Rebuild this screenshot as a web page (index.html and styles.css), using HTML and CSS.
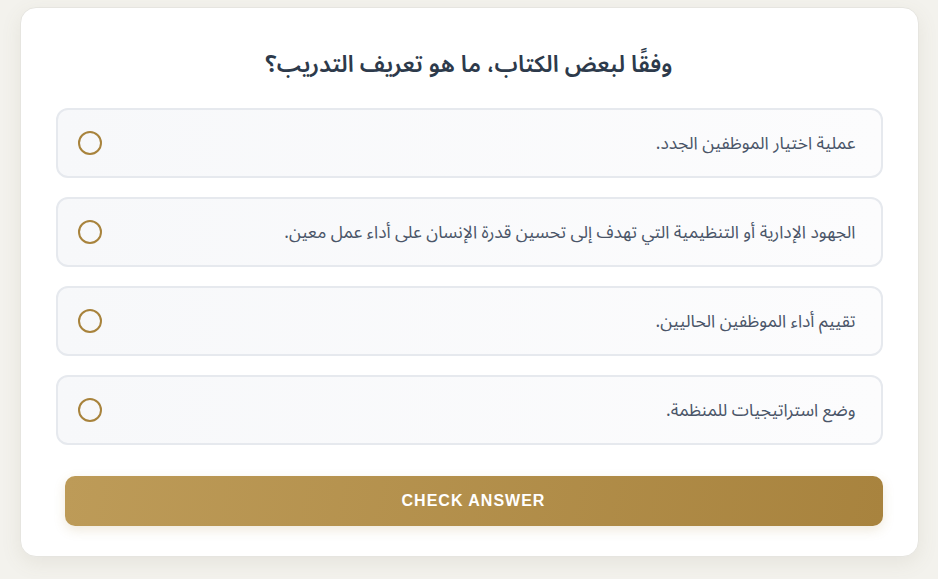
FILE: index.html
```html
<!DOCTYPE html>
<html lang="ar" dir="rtl">
<head>
<meta charset="utf-8">
<title>Quiz</title>
<link rel="stylesheet" href="styles.css">
</head>
<body>
<div class="card">
  <h2 class="question">وفقًا لبعض الكتاب، ما هو تعريف التدريب؟</h2>
  <div class="options">
    <label class="option"><span class="opt-text">عملية اختيار الموظفين الجدد.</span><span class="radio"></span></label>
    <label class="option"><span class="opt-text">الجهود الإدارية أو التنظيمية التي تهدف إلى تحسين قدرة الإنسان على أداء عمل معين.</span><span class="radio"></span></label>
    <label class="option"><span class="opt-text">تقييم أداء الموظفين الحاليين.</span><span class="radio"></span></label>
    <label class="option"><span class="opt-text">وضع استراتيجيات للمنظمة.</span><span class="radio"></span></label>
  </div>
  <button class="check-btn">CHECK ANSWER</button>
</div>
</body>
</html>
```
FILE: styles.css
```css
html, body {
  margin: 0;
  padding: 0;
}
body {
  background: #f3f2ed;
  font-family: "Noto Sans Arabic", "Noto Sans", sans-serif;
  padding-top: 7px;
  min-height: 579px;
  box-sizing: border-box;
}
.card {
  width: 899px;
  margin: 0 auto;
  box-sizing: border-box;
  background: #ffffff;
  border: 1px solid #e6e5e0;
  border-radius: 16px;
  padding: 40px 35px 30px;
  box-shadow: 0 6px 20px rgba(120, 110, 80, 0.10);
}
.question {
  margin: 0 0 26px;
  text-align: center;
  font-size: 23.2px;
  font-weight: 600;
  color: #2d3a4b;
  line-height: 34px;
}
.options {
  display: flex;
  flex-direction: column;
  gap: 19px;
}
.option {
  height: 70px;
  box-sizing: border-box;
  border: 2px solid #e6e9ee;
  border-radius: 12px;
  background: linear-gradient(90deg, #f7f8fa 0%, #fcfcfd 100%);
  display: flex;
  align-items: center;
  justify-content: space-between;
  padding: 0 25px 0 20px;
}
.opt-text {
  font-size: 17.4px;
  color: #4a5568;
}
.radio {
  width: 24px;
  height: 24px;
  box-sizing: border-box;
  border: 2px solid #a8833c;
  border-radius: 50%;
  flex: none;
}
.check-btn {
  display: block;
  margin: 31px 0 0 0;
  width: calc(100% - 9px);
  height: 50px;
  border: none;
  border-radius: 10px;
  background: linear-gradient(100deg, #bd9b58 0%, #a8833e 100%);
  color: #ffffff;
  font-family: "Liberation Sans", Arial, sans-serif;
  font-weight: 700;
  font-size: 16px;
  letter-spacing: 1px;
  box-shadow: 0 4px 12px rgba(168, 131, 62, 0.18);
}
```
